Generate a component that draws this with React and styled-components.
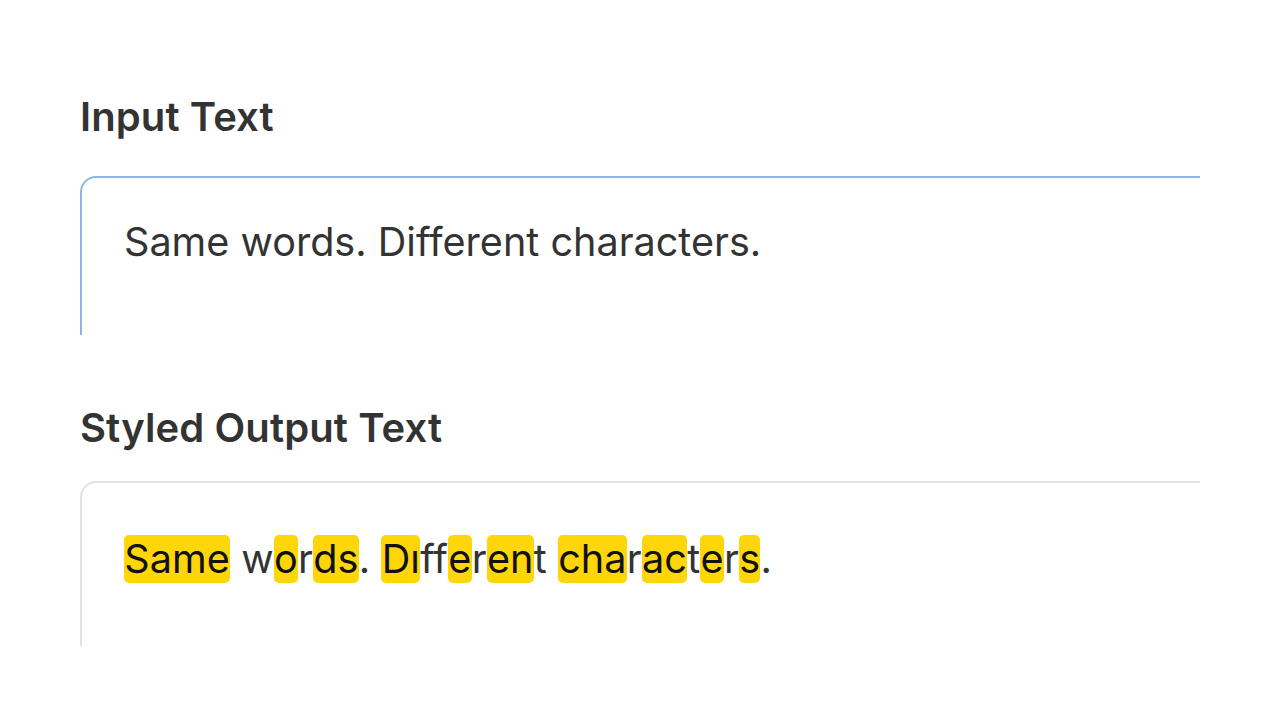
import React from "react";
import styled, { createGlobalStyle } from "styled-components";

const Global = createGlobalStyle`
  html, body { margin: 0; padding: 0; background: #fff; }
  body { font-family: Inter, "Noto Sans", sans-serif; color: #333; }
`;

const Page = styled.main`
  width: 1280px;
  height: 720px;
  overflow: hidden;
  box-sizing: border-box;
  padding: 93px 80px 0 80px;
  display: flex;
  flex-direction: column;
`;

const Section = styled.section`
  display: flex;
  flex-direction: column;
  gap: ${(p) => p.$gap}px;
  margin-top: ${(p) => p.$top || 0}px;
`;

const Label = styled.h2`
  margin: 0;
  font-size: 40px;
  line-height: 48px;
  font-weight: 600;
  color: #333;
  letter-spacing: 0.1px;
`;

const Clip = styled.div`
  height: ${(p) => p.$h}px;
  overflow: hidden;
`;

const Field = styled.div`
  box-sizing: border-box;
  width: calc(100% + 40px);
  height: 320px;
  border: 2px solid ${(p) => (p.$focus ? "#8fb4e6" : "#e2e2e2")};
  border-radius: 16px;
  padding: ${(p) => p.$padTop}px 42px 0 42px;
  font-size: 39.6px;
  line-height: 48px;
  color: #333;
`;

const Mark = styled.span`
  background: #ffd60a;
  color: #111;
  border-radius: 5px;
  padding: 0 0.35px;
`;

const parts = [
  ["Same", true], [" w", false], ["o", true], ["r", false], ["ds", true],
  [". ", false], ["Dı", true], ["ff", false], ["e", true], ["r", false],
  ["en", true], ["t ", false], ["cha", true], ["r", false], ["ac", true],
  ["t", false], ["e", true], ["r", false], ["s", true], [".", false],
];

export default function App() {
  return (
    <>
      <Global />
      <Page>
        <Section $gap={35}>
          <Label>Input Text</Label>
          <Clip $h={159}>
            <Field $focus $padTop={40}>Same words. Different characters.</Field>
          </Clip>
        </Section>
        <Section $gap={29} $top={69}>
          <Label>Styled Output Text</Label>
          <Clip $h={165}>
            <Field $padTop={52}>
              {parts.map(([t, on], i) =>
                on ? <Mark key={i}>{t}</Mark> : <React.Fragment key={i}>{t}</React.Fragment>
              )}
            </Field>
          </Clip>
        </Section>
      </Page>
    </>
  );
}
